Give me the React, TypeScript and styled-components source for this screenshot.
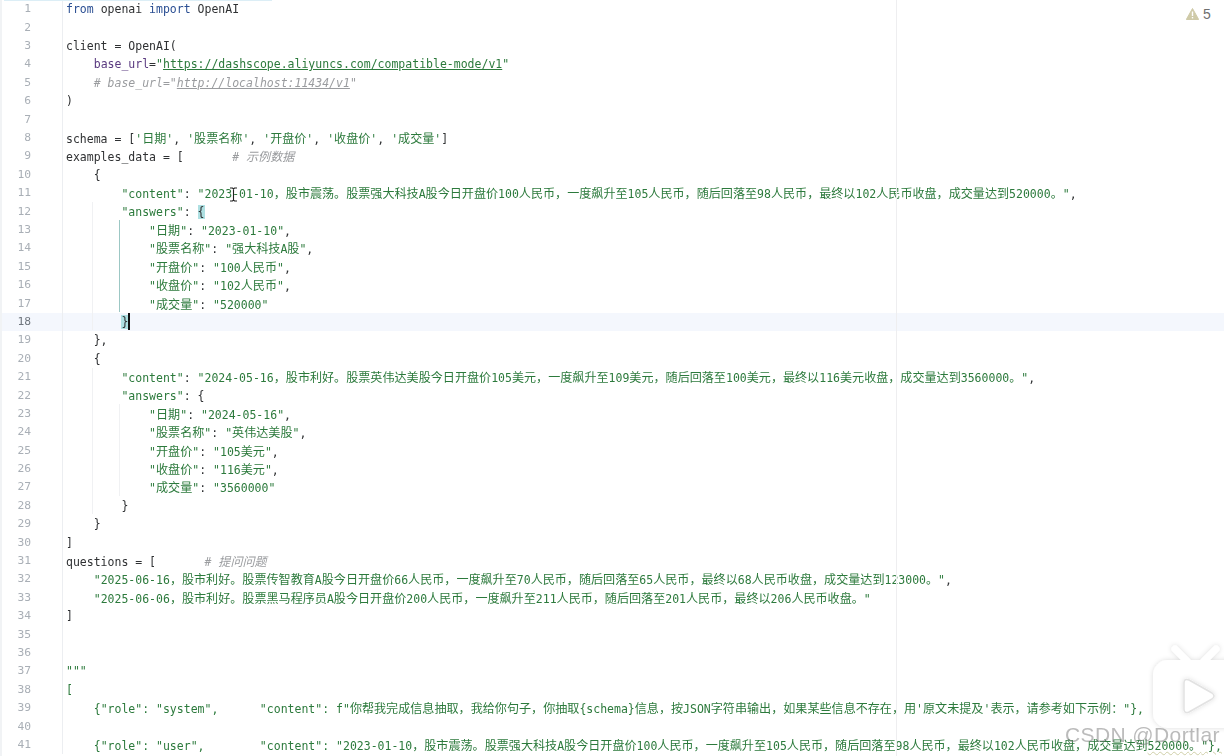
import React from "react";
import styled, { createGlobalStyle } from "styled-components";

const Global = createGlobalStyle`
  html, body { margin: 0; padding: 0; background: #fff; overflow: hidden; }
`;
const Page = styled.div`
  position: relative;
  width: 1224px;
  height: 756px;
  overflow: hidden;
  background: #fff;
`;
const Editor = styled.div`
  display: flex;
  flex-direction: column;
  height: 756px;
  padding: 0.3px 0 0 2px;
  box-sizing: border-box;
  filter: blur(0.45px);
  font-family: "DejaVu Sans Mono", "Noto Sans CJK SC", monospace;
  font-size: 11.5px;
  color: #2f3133;
  background: linear-gradient(90deg, #f1f3f5 0 2px, transparent 2px);
`;
const Row = styled.div<{ $current?: boolean }>`
  display: flex;
  flex: 0 0 18.4px;
  height: 18.4px;
  line-height: 18.4px;
  white-space: pre;
  background: ${(p) => (p.$current ? "#f4f7fd" : "transparent")};
`;
const Gutter = styled.div<{ $current?: boolean }>`
  flex: 0 0 29px;
  padding-right: 31px;
  text-align: right;
  color: ${(p) => (p.$current ? "#6f767e" : "#a9afb6")};
  border-right: 1px solid #eceef1;
  margin-right: 3px;
  font-size: 11.3px;
`;
const Han = styled.span`
  font-size: 12.08px;
  font-family: "Noto Sans CJK SC", sans-serif;
`;
const StrBase = styled.span`color: #2c7a3c;`;
const Kw = styled.span`color: #2b4f93;`;
const Arg = styled.span`color: #5a3a80;`;
const UrlText = styled.span`color: #2c7a3c; text-decoration: underline;`;
const CommentBase = styled.span`color: #9a9c9f; font-style: italic;`;
const CommentUrl = styled(CommentBase)`text-decoration: underline;`;
const Wavy = styled.span`
  text-decoration: underline wavy #cfcfa8;
  text-decoration-thickness: 1px;
`;
const Match = styled.span`background: #aee0e2;`;
const Caret = styled.span`
  display: inline-block;
  width: 1.5px;
  height: 17px;
  vertical-align: -4px;
  background: #111;
`;
const TopBar = styled.div`
  position: absolute;
  left: 4px;
  top: 0;
  width: 268px;
  height: 1px;
  background: #dceef6;
`;
const MarginLine = styled.div`
  position: absolute;
  left: 896px;
  top: 0;
  width: 1px;
  height: 756px;
  background: #eeeef0;
`;
const Guide = styled.div<{ $x: number; $top: number; $h: number; $active?: boolean }>`
  position: absolute;
  left: ${(p) => p.$x}px;
  top: ${(p) => p.$top}px;
  width: 1px;
  height: ${(p) => p.$h}px;
  background: ${(p) => (p.$active ? "#9cc7c4" : "#f0f1f3")};
`;
const Warning = styled.div`
  position: absolute;
  left: 1186px;
  top: 6px;
  display: flex;
  align-items: center;
  gap: 4px;
  font: 14px "Liberation Sans", sans-serif;
  color: #6f6f6f;
`;
const IBeam = styled.svg`
  position: absolute;
  left: 229px;
  top: 187px;
`;
const TvLogo = styled.svg`
  position: absolute;
  left: 1146px;
  top: 640px;
`;
const Watermark = styled.div`
  position: absolute;
  left: 1065px;
  top: 723px;
  font: 21px "Liberation Sans", sans-serif;
  letter-spacing: 0.4px;
  color: rgba(120, 120, 120, 0.5);
  white-space: nowrap;
  filter: blur(0.4px);
`;

const han = (text: string) =>
  text.split(/([\u3000-\u9fff\uff00-\uffef]+)/).map((part, i) =>
    i % 2 ? <Han key={i}>{part}</Han> : part
  );
const Str = ({ children }: { children: string }) => <StrBase>{han(children)}</StrBase>;
const Comment = ({ children }: { children: string }) => <CommentBase>{han(children)}</CommentBase>;

const lines: React.ReactNode[] = [
  <><Kw>from</Kw> openai <Kw>import</Kw> OpenAI</>,
  "",
  "client = OpenAI(",
  <>    <Arg>base_url</Arg>=<Str>"</Str><UrlText>https://dashscope.aliyuncs.com/compatible-mode/v1</UrlText><Str>"</Str></>,
  <>    <Comment># base_url="</Comment><CommentUrl>http://localhost:11434/v1</CommentUrl><Comment>"</Comment></>,
  ")",
  "",
  <>schema = [<Str>'日期'</Str>, <Str>'股票名称'</Str>, <Str>'开盘价'</Str>, <Str>'收盘价'</Str>, <Str>'成交量'</Str>]</>,
  <>examples_data = [       <Comment># 示例数据</Comment></>,
  "    {",
  <>        <Str>"content"</Str>: <Str>"2023-01-10，股市震荡。股票强大科技A股今日开盘价100人民币，一度飙升至105人民币，随后回落至98人民币，最终以102人民币收盘，成交量达到520000。"</Str>,</>,
  <>        <Str>"answers"</Str>: <Match>{"{"}</Match></>,
  <>            <Str>"日期"</Str>: <Str>"2023-01-10"</Str>,</>,
  <>            <Str>"股票名称"</Str>: <Str>"强大科技A股"</Str>,</>,
  <>            <Str>"开盘价"</Str>: <Str>"100人民币"</Str>,</>,
  <>            <Str>"收盘价"</Str>: <Str>"102人民币"</Str>,</>,
  <>            <Str>"成交量"</Str>: <Str>"520000"</Str></>,
  <>        <Match>{"}"}</Match><Caret /></>,
  "    },",
  "    {",
  <>        <Str>"content"</Str>: <Str>"2024-05-16，股市利好。股票英伟达美股今日开盘价105美元，一度飙升至109美元，随后回落至100美元，最终以116美元收盘，成交量达到3560000。"</Str>,</>,
  <>        <Str>"answers"</Str>: {"{"}</>,
  <>            <Str>"日期"</Str>: <Str>"2024-05-16"</Str>,</>,
  <>            <Str>"股票名称"</Str>: <Str>"英伟达美股"</Str>,</>,
  <>            <Str>"开盘价"</Str>: <Str>"105美元"</Str>,</>,
  <>            <Str>"收盘价"</Str>: <Str>"116美元"</Str>,</>,
  <>            <Str>"成交量"</Str>: <Str>"3560000"</Str></>,
  "        }",
  "    }",
  "]",
  <>questions = [       <Comment># 提问问题</Comment></>,
  <>    <Str>"2025-06-16，股市利好。股票传智教育A股今日开盘价66人民币，一度飙升至70人民币，随后回落至65人民币，最终以68人民币收盘，成交量达到123000。"</Str>,</>,
  <>    <Str>"2025-06-06，股市利好。股票黑马程序员A股今日开盘价200人民币，一度飙升至211人民币，随后回落至201人民币，最终以206人民币收盘。"</Str></>,
  "]",
  "",
  "",
  <Str>"""</Str>,
  <Str>[</Str>,
  <>    <Str>{`{"role": "system",      "content": f"你帮我完成信息抽取，我给你句子，你抽取{schema}信息，按JSON字符串输出，如果某些信息不存在，用'原文未提及'表示，请参考如下示例："},`}</Str></>,
  "",
  <>    <Str>{`{"role": "user",        "content": "2023-01-10，股市震荡。股票强大科技A股今日开盘价100人民币，一度飙升至105人民币，随后回落至98人民币，最终以102人民币收盘，成交量达到`}</Str><Wavy><Str>{`520000。"},`}</Str></Wavy></>,
];

export default function App() {
  return (
    <Page>
      <Global />
      <Editor>
        {lines.map((l, i) => (
          <Row key={i} $current={i === 17}>
            <Gutter $current={i === 17}>{i + 1}</Gutter>
            <span>{l}</span>
          </Row>
        ))}
      </Editor>
      <TopBar />
      <MarginLine />
      <Guide $x={92} $top={202} $h={128} />
      <Guide $x={92} $top={368} $h={146} />
      <Guide $x={119} $top={220} $h={92} $active />
      <Guide $x={119} $top={404} $h={92} />
      <IBeam width="9" height="15" viewBox="0 0 9 15">
        <path d="M1 1h2.5l1 1 1-1H8M4.5 2v11M1 14h2.5l1-1 1 1H8" fill="none" stroke="#222" strokeWidth="1.1" />
      </IBeam>
      <Warning>
        <svg width="13" height="12" viewBox="0 0 13 12">
          <path d="M6.5 0.5 12.7 11.5H0.3Z" fill="#cfcaa8" stroke="#cfcaa8" strokeLinejoin="round" />
          <rect x="5.8" y="3.5" width="1.4" height="4.5" fill="#fff" />
          <rect x="5.8" y="9" width="1.4" height="1.4" fill="#fff" />
        </svg>
        5
      </Warning>
      <Watermark>CSDN @Dortlar</Watermark>
      <TvLogo width="78" height="110" viewBox="0 0 78 110">
        <defs>
          <filter id="tvshadow" x="-20%" y="-20%" width="140%" height="140%">
            <feDropShadow dx="0" dy="0" stdDeviation="2.5" floodColor="#000" floodOpacity="0.14" />
          </filter>
        </defs>
        <g filter="url(#tvshadow)">
          <path d="M29 9 L41 21 M70 9 L58 21" stroke="#fff" strokeWidth="7" strokeLinecap="round" />
          <rect x="7" y="20" width="90" height="68" rx="15" fill="#fff" />
        </g>
        <path d="M38 43 Q38 38 43 40 L66 53 Q70 56 66 59 L43 72 Q38 74 38 69Z" fill="#fff" stroke="#e2e2e2" strokeWidth="1.5" filter="url(#tvshadow)" />
      </TvLogo>
    </Page>
  );
}
